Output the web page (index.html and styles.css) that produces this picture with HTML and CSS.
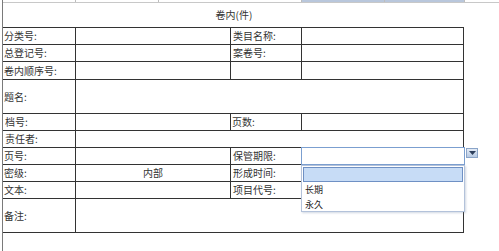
FILE: index.html
```html
<!DOCTYPE html>
<html lang="zh">
<head>
<meta charset="utf-8">
<link rel="stylesheet" href="styles.css">
</head>
<body>
<div class="page">
  <div class="topstrip">
    <span class="seg s1"></span><span class="seg s2"></span><span class="seg s3"></span><span class="seg s4 blue"></span><span class="seg s5 blue"></span><span class="seg s6"></span>
  </div>
  <div class="title">卷内(件)</div>
  <div class="grid">
    <div class="c">分类号:</div><div class="c"></div><div class="c">类目名称:</div><div class="c"></div>
    <div class="c">总登记号:</div><div class="c"></div><div class="c">案卷号:</div><div class="c"></div>
    <div class="c r18">卷内顺序号:</div><div class="c r18"></div><div class="c r18"></div><div class="c r18"></div>
    <div class="c r34">题名:</div><div class="c r34 span3"></div>
    <div class="c">档号:</div><div class="c"></div><div class="c">页数:</div><div class="c"></div>
    <div class="c">责任者:</div><div class="c span3"></div>
    <div class="c">页号:</div><div class="c"></div><div class="c">保管期限:</div>
    <div class="c combo-cell">
      <div class="combo-input"></div>
      <div class="combo-btn"><svg width="7" height="4" viewBox="0 0 7 4"><path d="M0 0H7L3.5 4Z" fill="#2c3e5c"/></svg></div>
      <ul class="combo-list">
        <li class="opt sel"></li>
        <li class="opt">长期</li>
        <li class="opt">永久</li>
      </ul>
    </div>
    <div class="c">密级:</div><div class="c center">内部</div><div class="c">形成时间:</div><div class="c"></div>
    <div class="c">文本:</div><div class="c"></div><div class="c">项目代号:</div><div class="c"></div>
    <div class="c r34">备注:</div><div class="c r34 span3"></div>
  </div>
</div>
</body>
</html>
```
FILE: styles.css
```css
* { box-sizing: border-box; }
html, body { margin: 0; padding: 0; background: #fff; }
body {
  width: 499px;
  height: 251px;
  overflow: hidden;
  font-family: "Noto Sans CJK SC", "Noto Sans", sans-serif;
  color: #333;
}
.page {
  margin-left: 2px;
  height: 251px;
  border-left: 1px solid #7a7a7a;
}
.topstrip {
  display: flex;
  height: 3px;
  border-bottom: 1px solid #c8c8c8;
}
.seg { display: block; height: 2px; border-right: 1px solid #bdbdbd; }
.s1 { width: 73px; }
.s2 { width: 83px; }
.s3 { width: 143px; }
.s4 { width: 83px; }
.s5 { width: 80px; }
.s6 { flex: 1; border-right: none; }
.blue { background: #b9c7dc; }
.title {
  width: 462px;
  height: 24px;
  line-height: 24px;
  text-align: center;
  font-size: 10px;
  color: #333;
}
.grid {
  display: grid;
  grid-template-columns: 73px 155px 71px 162px;
  grid-template-rows: 17px 17px 18px 34px 17px 17px 17px 17px 17px 34px;
  width: 461px;
  border-top: 1px solid #333;
}
.c {
  height: 17px;
  border-right: 1px solid #333;
  border-bottom: 1px solid #333;
  font-size: 10px;
  line-height: 16px;
  padding-left: 1px;
  white-space: nowrap;
}
.c:nth-child(4n+3) { padding-left: 2px; }
.r18 { height: 18px; line-height: 17px; }
.r34 { height: 34px; line-height: 33px; }
.span3 { grid-column: span 3; }
.center { text-align: center; padding-left: 0; }
.combo-cell { position: relative; padding: 0; }
.combo-input {
  position: absolute;
  left: -1px;
  top: -1px;
  width: 164px;
  height: 18px;
  border: 1px solid #7b9fd0;
  background: #fff;
  z-index: 2;
}
.combo-btn {
  position: absolute;
  left: 164px;
  top: 0;
  width: 12px;
  height: 10px;
  border: 1px solid #8aa4c8;
  background: linear-gradient(#e3ebf6, #b7c9e2);
  display: flex;
  align-items: center;
  justify-content: center;
  z-index: 2;
}
.combo-list {
  position: absolute;
  left: -1px;
  top: 17px;
  width: 164px;
  height: 47px;
  margin: 0;
  padding: 1px;
  list-style: none;
  background: #fff;
  border: 1px solid #b3c2da;
  box-shadow: 1px 1px 2px rgba(120, 140, 170, 0.35);
  z-index: 3;
}
.opt {
  height: 15px;
  line-height: 15px;
  font-size: 9px;
  padding-left: 2px;
  color: #222;
}
.opt.sel {
  height: 15px;
  background: #c7dcf6;
  border: 1px solid #6f90c4;
}
```
